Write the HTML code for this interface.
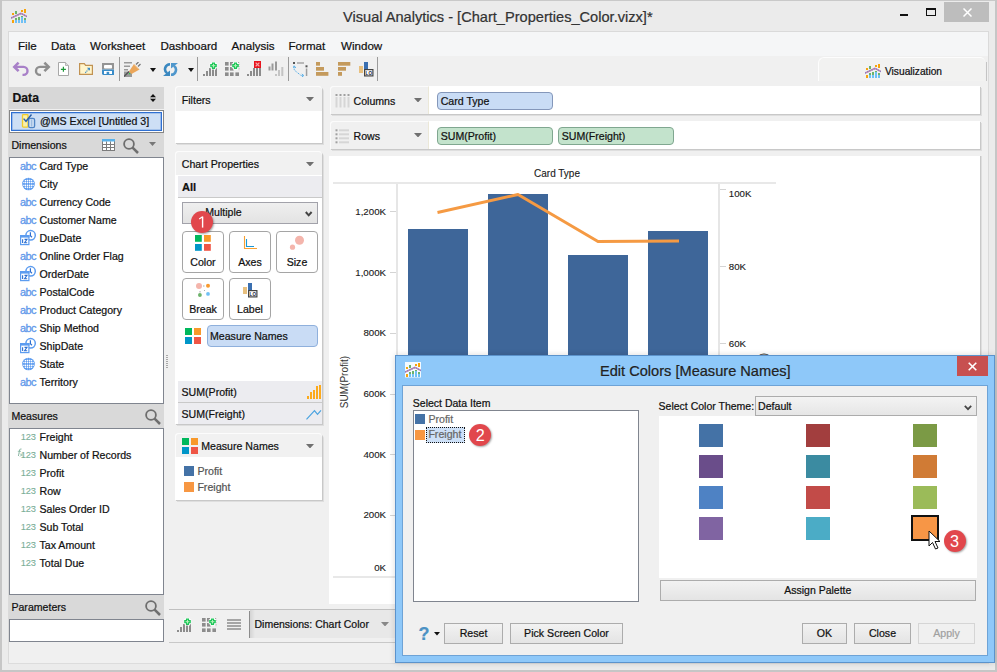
<!DOCTYPE html><html><head><meta charset="utf-8"><style>
html,body{margin:0;padding:0;}
body{width:997px;height:672px;overflow:hidden;position:relative;font-family:"Liberation Sans",sans-serif;}
body>div,body>svg{position:absolute;}
.t{white-space:nowrap;line-height:1;-webkit-text-stroke:0.22px currentColor;}
</style></head><body>
<div style="left:0px;top:0px;width:997px;height:672px;background:#ebebeb"></div>
<div style="left:0px;top:0px;width:997px;height:1px;background:#c9c9c9"></div>
<div style="left:0px;top:0px;width:2px;height:672px;background:#c6c6c6"></div>
<div style="left:995px;top:0px;width:2px;height:672px;background:#c6c6c6"></div>
<div style="left:0px;top:670px;width:997px;height:2px;background:#c6c6c6"></div>
<svg style="left:11px;top:8px;" width="16" height="16" viewBox="0 0 16 16"><rect x="1" y="12" width="2" height="3" fill="#f7a30c"/><rect x="4" y="12" width="2" height="3" fill="#6fc0f5"/><rect x="4" y="10" width="2" height="2" fill="#6db36b"/><rect x="7" y="12" width="2" height="3" fill="#6fc0f5"/><rect x="7" y="9" width="2" height="3" fill="#6db36b"/><rect x="10" y="9" width="2" height="6" fill="#6fc0f5"/><rect x="10" y="8" width="2" height="1" fill="#6db36b"/><rect x="13" y="12" width="2" height="3" fill="#6fc0f5"/><rect x="13" y="10" width="2" height="2" fill="#6db36b"/><rect x="1" y="5" width="2" height="2" fill="#f7a30c"/><rect x="4" y="3" width="2" height="3" fill="#6db36b"/><rect x="10" y="2" width="2" height="2" fill="#f7a30c"/><rect x="13" y="1" width="2" height="4" fill="#f7a30c"/><polyline points="0,10 10,5.4 16,8.6" fill="none" stroke="#c98ba8" stroke-width="1.5"/><polyline points="0,10 10,5.4 16,8.6" fill="none" stroke="#8e7cc3" stroke-width="1.5" stroke-dasharray="1.2 1.2"/></svg>
<div class="t" style="left:343px;top:9.64px;font-size:14.6px;color:#333">Visual Analytics - [Chart_Properties_Color.vizx]*</div>
<div style="left:900px;top:14px;width:8px;height:2px;background:#111"></div>
<div style="left:926px;top:8px;width:10px;height:8px;border:1px solid #111;border-top-width:2px;box-sizing:border-box"></div>
<div style="left:944px;top:2px;width:45px;height:20px;background:#bdbdbd"></div>
<svg style="left:963px;top:8px;" width="9" height="9" viewBox="0 0 9 9"><path d="M0.5 0.5L8.5 8.5M8.5 0.5L0.5 8.5" stroke="#fff" stroke-width="1.5"/></svg>
<div style="left:8px;top:31px;width:981px;height:633px;background:#f0f0f0;border:1px solid #dadada;box-sizing:border-box"></div>
<div style="left:9px;top:32px;width:979px;height:24px;background:#f5f6f7"></div>
<div class="t" style="left:18px;top:40.18px;font-size:11.6px;color:#111">File</div>
<div class="t" style="left:51px;top:40.18px;font-size:11.6px;color:#111">Data</div>
<div class="t" style="left:90px;top:40.18px;font-size:11.6px;color:#111">Worksheet</div>
<div class="t" style="left:160.5px;top:40.18px;font-size:11.6px;color:#111">Dashboard</div>
<div class="t" style="left:231.5px;top:40.18px;font-size:11.6px;color:#111">Analysis</div>
<div class="t" style="left:288.5px;top:40.18px;font-size:11.6px;color:#111">Format</div>
<div class="t" style="left:341px;top:40.18px;font-size:11.6px;color:#111">Window</div>
<div style="left:9px;top:56px;width:979px;height:30px;background:#f0f0f0"></div>
<svg style="left:12px;top:61px;" width="17" height="16" viewBox="0 0 17 16"><path d="M2.5 5.9 H11.5 A4 4 0 0 1 11.5 13.9 H10.5" fill="none" stroke="#a880c8" stroke-width="2.4"/><path d="M6.6 1.6 L2.3 5.9 L6.6 10.2" fill="none" stroke="#a880c8" stroke-width="2.6"/></svg>
<svg style="left:34px;top:61px;" width="17" height="16" viewBox="0 0 17 16"><path d="M14.5 5.9 H6 A4 4 0 0 0 6 13.9 H7" fill="none" stroke="#8e8e8e" stroke-width="2.4"/><path d="M10.4 1.6 L14.7 5.9 L10.4 10.2" fill="none" stroke="#8e8e8e" stroke-width="2.6"/></svg>
<svg style="left:58px;top:62px;" width="11" height="14" viewBox="0 0 11 14"><path d="M0.5 0.5 H7.5 L10.5 3.5 V13.5 H0.5 Z" fill="#fff" stroke="#a8a8a8"/><path d="M7.5 0.5 V3.5 H10.5" fill="#ddd" stroke="#a8a8a8" stroke-width="0.8"/><path d="M5.4 4.8 V9.8 M2.9 7.3 H7.9" stroke="#1f9a3a" stroke-width="1.2"/></svg>
<svg style="left:79px;top:63px;" width="14" height="12" viewBox="0 0 14 12"><path d="M0.6 0.6 H5.3 L6.6 2.4 H13.4 V11.4 H0.6 Z" fill="#fff5cc" stroke="#c19252" stroke-width="1.2"/><path d="M6.3 9.8 L10.3 5.6" stroke="#3a8cc8" stroke-width="1.1" stroke-dasharray="1.1 0.7"/><path d="M7.9 4.7 H11 V7.8 Z" fill="#3a8cc8"/></svg>
<svg style="left:102px;top:63px;" width="12" height="12" viewBox="0 0 12 12"><rect x="0" y="0" width="12" height="6.5" fill="#949494"/><rect x="2" y="2" width="8" height="3.6" rx="0.8" fill="#fff"/><path d="M0 6.5 H12 V12 H1 L0 11 Z" fill="#3a8cc8"/><rect x="2" y="8" width="8" height="3" fill="#fff"/><rect x="4.6" y="8.8" width="2.6" height="2.2" fill="#3a8cc8"/></svg>
<div style="left:119px;top:57px;width:1px;height:24px;background:#9a9a9a"></div>
<svg style="left:124px;top:62px;" width="17" height="15" viewBox="0 0 17 15"><path d="M0 0.7 H8 M0 4.2 H6 M0 7.7 H4" stroke="#9a9a9a" stroke-width="1.4"/><rect x="0" y="9.5" width="8" height="5.5" fill="#9a9a9a"/><path d="M0 14.5 L5 9.5" stroke="#555" stroke-width="1.4"/><path d="M12 2.5 L14.5 0 M14 4.5 L16.5 2" stroke="#777" stroke-width="1.3"/><path d="M5 9.5 L10 2 L15.5 7.5 L7.5 12 Z" fill="#eba65a"/><path d="M10.5 2.8 L14.8 7.2" stroke="#f6d3a6" stroke-width="0.8"/><rect x="5" y="11" width="1.2" height="1.2" fill="#1fdc3a"/></svg>
<svg style="left:150px;top:68px;" width="6" height="4" viewBox="0 0 6 4"><path d="M0 0 H6 L3 4 Z" fill="#111"/></svg>
<svg style="left:163px;top:62px;" width="15" height="15" viewBox="0 0 15 15"><path d="M7 2.2 A5 5 0 0 0 4.2 11.3" fill="none" stroke="#3a88c0" stroke-width="2.6"/><path d="M0 14 H7 V8.5 Z" fill="#3a88c0"/><path d="M8 12.8 A5 5 0 0 0 10.8 3.7" fill="none" stroke="#4f97cc" stroke-width="2.6"/><path d="M15 1 H8 V6.5 Z" fill="#4f97cc"/></svg>
<svg style="left:188px;top:68px;" width="6" height="4" viewBox="0 0 6 4"><path d="M0 0 H6 L3 4 Z" fill="#111"/></svg>
<div style="left:197px;top:57px;width:1px;height:24px;background:#9a9a9a"></div>
<svg style="left:203px;top:62px;" width="15" height="14" viewBox="0 0 15 14"><rect x="0" y="12" width="2" height="2" fill="#8c8c8c"/><rect x="3" y="9" width="2" height="5" fill="#8c8c8c"/><rect x="6" y="6" width="2" height="8" fill="#8c8c8c"/><rect x="9" y="6" width="2" height="8" fill="#8c8c8c"/><rect x="12" y="6" width="2" height="8" fill="#8c8c8c"/><path d="M10.5 0 V7.4 M6.8 3.7 H14.2" stroke="#fff" stroke-width="5"/><path d="M10.5 0.4 V7 M7.2 3.7 H13.8" stroke="#1cc558" stroke-width="3.2"/><path d="M10.5 1.8 V5.6 M8.6 3.7 H12.4" stroke="#b4f0b8" stroke-width="1"/></svg>
<svg style="left:225px;top:62px;" width="15" height="14" viewBox="0 0 15 14"><rect x="0" y="0" width="3.6" height="3.6" fill="#8c8c8c"/><rect x="5" y="0" width="3.6" height="3.6" fill="#8c8c8c"/><rect x="0" y="5" width="3.6" height="3.6" fill="#8c8c8c"/><rect x="5" y="5" width="3.6" height="3.6" fill="#8c8c8c"/><rect x="0" y="10.4" width="3.6" height="3.6" fill="#8c8c8c"/><rect x="5" y="10.4" width="3.6" height="3.6" fill="#8c8c8c"/><rect x="10.4" y="10.4" width="3.6" height="3.6" fill="#8c8c8c"/><path d="M6.5 0.5 H14 V8.5" fill="none" stroke="#8c8c8c" stroke-width="0.8" stroke-dasharray="1.2 1"/><path d="M10.5 0 V7.4 M6.8 3.7 H14.2" stroke="#fff" stroke-width="5"/><path d="M10.5 0.4 V7 M7.2 3.7 H13.8" stroke="#1cc558" stroke-width="3.2"/><path d="M10.5 1.8 V5.6 M8.6 3.7 H12.4" stroke="#b4f0b8" stroke-width="1"/></svg>
<svg style="left:247px;top:61px;" width="15" height="15" viewBox="0 0 15 15"><rect x="0" y="13" width="2" height="2" fill="#8c8c8c"/><rect x="3" y="10" width="2" height="5" fill="#8c8c8c"/><rect x="6" y="7" width="2" height="8" fill="#8c8c8c"/><rect x="9" y="7" width="2" height="8" fill="#8c8c8c"/><rect x="12" y="7" width="2" height="8" fill="#8c8c8c"/><rect x="7" y="0" width="7" height="7" fill="#e8141e"/><path d="M8.6 1.6 L12.4 5.4 M12.4 1.6 L8.6 5.4" stroke="#f7a7a7" stroke-width="1.3"/></svg>
<svg style="left:268px;top:61px;" width="16" height="16" viewBox="0 0 16 16"><rect x="0.5" y="5.5" width="2" height="4" fill="#999"/><rect x="3.5" y="2.5" width="2" height="7" fill="#999"/><rect x="7" y="0.5" width="2" height="9" fill="#999"/><rect x="7" y="13" width="2" height="2" fill="#c4c4c4"/><rect x="10" y="9" width="2" height="6" fill="#c4c4c4"/><rect x="13.3" y="6" width="2" height="9" fill="#c4c4c4"/></svg>
<div style="left:288px;top:57px;width:1px;height:24px;background:#9a9a9a"></div>
<svg style="left:293px;top:62px;" width="15" height="15" viewBox="0 0 15 15"><rect x="0" y="0" width="2" height="2" fill="#555"/><rect x="4" y="0.3" width="7" height="1.4" fill="#a0a0a0"/><rect x="12.5" y="3.3" width="2" height="2" fill="#555"/><rect x="12.8" y="6.5" width="1.5" height="7.5" fill="#a0a0a0"/><path d="M1.2 4.5 V8 L8 13.5 H10.5" fill="none" stroke="#5ab0e8" stroke-width="1" stroke-dasharray="1.3 0.8"/><path d="M0 6 L1.2 3.8 L2.8 6 M8.8 12 L10.8 13.5 L8.8 15" fill="none" stroke="#5ab0e8" stroke-width="1"/></svg>
<svg style="left:316px;top:62px;" width="13" height="14" viewBox="0 0 13 14"><rect x="0" y="0" width="4" height="3.7" fill="#c49a5c"/><rect x="0" y="5" width="8" height="3.7" fill="#c49a5c"/><rect x="0" y="10" width="12.4" height="3.8" fill="#c49a5c"/></svg>
<svg style="left:338px;top:62px;" width="13" height="14" viewBox="0 0 13 14"><rect x="0" y="0" width="12.3" height="3.7" fill="#c49a5c"/><rect x="0" y="5" width="8" height="3.7" fill="#c49a5c"/><rect x="0" y="10" width="4" height="3.8" fill="#c49a5c"/></svg>
<svg style="left:358px;top:61px;" width="16" height="16" viewBox="0 0 16 16"><rect x="1" y="5" width="4" height="7" fill="#e8c07e"/><rect x="6" y="1" width="4" height="8" fill="#3a6fb0"/><rect x="6.6" y="8.6" width="8.3" height="6.3" fill="#fff" stroke="#444" stroke-width="1.2"/><text x="10.8" y="13.6" font-size="4.6" font-family="Liberation Sans" font-weight="bold" text-anchor="middle" fill="#223">LO</text></svg>
<div style="left:377px;top:57px;width:1px;height:24px;background:#9a9a9a"></div>
<div style="left:818px;top:57px;width:167px;height:24px;background:#f2f2f1;border:1px solid #fdfdfd;border-bottom:none;border-right:none;border-radius:6px 5px 0 0;box-sizing:border-box"></div>
<div style="left:986px;top:62px;width:1px;height:19px;background:#c4c4c4"></div>
<svg style="left:865px;top:63px;" width="16" height="16" viewBox="0 0 16 16"><rect x="1" y="12" width="2" height="3" fill="#f7a30c"/><rect x="4" y="12" width="2" height="3" fill="#6fc0f5"/><rect x="4" y="10" width="2" height="2" fill="#6db36b"/><rect x="7" y="12" width="2" height="3" fill="#6fc0f5"/><rect x="7" y="9" width="2" height="3" fill="#6db36b"/><rect x="10" y="9" width="2" height="6" fill="#6fc0f5"/><rect x="10" y="8" width="2" height="1" fill="#6db36b"/><rect x="13" y="12" width="2" height="3" fill="#6fc0f5"/><rect x="13" y="10" width="2" height="2" fill="#6db36b"/><rect x="1" y="5" width="2" height="2" fill="#f7a30c"/><rect x="4" y="3" width="2" height="3" fill="#6db36b"/><rect x="10" y="2" width="2" height="2" fill="#f7a30c"/><rect x="13" y="1" width="2" height="4" fill="#f7a30c"/><polyline points="0,10 10,5.4 16,8.6" fill="none" stroke="#c98ba8" stroke-width="1.5"/><polyline points="0,10 10,5.4 16,8.6" fill="none" stroke="#8e7cc3" stroke-width="1.5" stroke-dasharray="1.2 1.2"/></svg>
<div class="t" style="left:885px;top:66.87px;font-size:10.2px;color:#111">Visualization</div>
<div style="left:9px;top:87px;width:155px;height:22px;background:#d7d7d7"></div>
<div class="t" style="left:12.5px;top:91.67px;font-size:12.2px;font-weight:bold;color:#111">Data</div>
<svg style="left:150px;top:94px;" width="6" height="8" viewBox="0 0 6 8"><path d="M0 3.3 L3 0 L6 3.3 Z M0 4.7 L3 8 L6 4.7 Z" fill="#111"/></svg>
<div style="left:9px;top:110px;width:155px;height:23px;background:#fff;border:1px solid #858585;box-sizing:border-box"></div>
<div style="left:11px;top:112px;width:151px;height:19px;background:#cddff5;border:1px solid #2f70d2;box-shadow:inset 0 0 0 0.6px rgba(47,112,210,0.5);box-sizing:border-box"></div>
<svg style="left:21px;top:113px;" width="15" height="16" viewBox="0 0 15 16"><rect x="1.5" y="1.6" width="5.5" height="12.5" rx="0.8" fill="#fbf1a8" stroke="#f0cc2c" stroke-width="1.3"/><rect x="7.6" y="5.4" width="6" height="9.2" rx="1.6" fill="#c9dcf2" stroke="#4f84c4" stroke-width="1.3"/><path d="M10.6 6.5 V13.5" stroke="#9cbbe0" stroke-width="1.2"/><path d="M2.6 5.6 L5 8.3 L10.5 1.5" fill="none" stroke="#2a5fa8" stroke-width="1.4"/></svg>
<div class="t" style="left:40px;top:116.03px;font-size:10.6px;color:#111">@MS Excel [Untitled 3]</div>
<div style="left:9px;top:133px;width:155px;height:24px;background:#d9d9d9"></div>
<div class="t" style="left:11.4px;top:140.03px;font-size:10.6px;color:#111">Dimensions</div>
<svg style="left:102px;top:139px;" width="13" height="12" viewBox="0 0 13 12"><rect x="0.5" y="0.5" width="12" height="11" fill="#fff" stroke="#7c7c7c"/><rect x="0" y="0" width="13" height="2.5" fill="#5ab2ea"/><path d="M0 5.5 H13 M0 8.5 H13 M4.5 2.5 V12 M8.5 2.5 V12" stroke="#7c7c7c"/></svg>
<svg style="left:123px;top:138px;" width="17" height="17" viewBox="0 0 17 17"><circle cx="6" cy="6" r="4.9" fill="none" stroke="#6e6e6e" stroke-width="1.8"/><path d="M9.6 9.6 L15 15" stroke="#6e6e6e" stroke-width="2.5"/></svg>
<svg style="left:149px;top:142px;" width="7" height="4" viewBox="0 0 7 4"><path d="M0 0 H7 L3.5 4 Z" fill="#777"/></svg>
<div style="left:9px;top:157px;width:155px;height:247px;background:#fff;border:1px solid #80858f;box-sizing:border-box"></div>
<div class="t" style="left:20px;top:160.69px;font-size:11px;color:#5f98ea;letter-spacing:-0.6px;-webkit-text-stroke:0.3px currentColor">abc</div>
<div class="t" style="left:39.5px;top:161.03px;font-size:10.6px;color:#111">Card Type</div>
<svg style="left:22px;top:177px;" width="13" height="14" viewBox="0 0 13 14"><circle cx="6.5" cy="7" r="6.3" fill="#5c9cf0"/><path d="M3 3.6 H10 M1.5 5.5 H11.5 M1.5 8.4 H11.5 M3 10.3 H10 M3.4 3 V11 M5.5 1 V13 M7.6 1 V13 M9.6 3 V11" stroke="#a2c4f5" stroke-width="0.6"/><rect x="2.80" y="3.00" width="1.2" height="1.2" fill="#fff"/><rect x="4.90" y="3.00" width="1.2" height="1.2" fill="#fff"/><rect x="7.00" y="3.00" width="1.2" height="1.2" fill="#fff"/><rect x="9.00" y="3.00" width="1.2" height="1.2" fill="#fff"/><rect x="2.80" y="4.90" width="1.2" height="1.2" fill="#fff"/><rect x="4.90" y="4.90" width="1.2" height="1.2" fill="#fff"/><rect x="7.00" y="4.90" width="1.2" height="1.2" fill="#fff"/><rect x="9.00" y="4.90" width="1.2" height="1.2" fill="#fff"/><rect x="2.80" y="7.80" width="1.2" height="1.2" fill="#fff"/><rect x="4.90" y="7.80" width="1.2" height="1.2" fill="#fff"/><rect x="7.00" y="7.80" width="1.2" height="1.2" fill="#fff"/><rect x="9.00" y="7.80" width="1.2" height="1.2" fill="#fff"/><rect x="2.80" y="9.70" width="1.2" height="1.2" fill="#fff"/><rect x="4.90" y="9.70" width="1.2" height="1.2" fill="#fff"/><rect x="7.00" y="9.70" width="1.2" height="1.2" fill="#fff"/><rect x="9.00" y="9.70" width="1.2" height="1.2" fill="#fff"/><rect x="1.30" y="4.90" width="1" height="1.2" fill="#fff"/><rect x="10.70" y="4.90" width="1" height="1.2" fill="#fff"/><rect x="1.30" y="7.80" width="1" height="1.2" fill="#fff"/><rect x="10.70" y="7.80" width="1" height="1.2" fill="#fff"/></svg>
<div class="t" style="left:39.5px;top:179.03px;font-size:10.6px;color:#111">City</div>
<div class="t" style="left:20px;top:196.69px;font-size:11px;color:#5f98ea;letter-spacing:-0.6px;-webkit-text-stroke:0.3px currentColor">abc</div>
<div class="t" style="left:39.5px;top:197.03px;font-size:10.6px;color:#111">Currency Code</div>
<div class="t" style="left:20px;top:214.69px;font-size:11px;color:#5f98ea;letter-spacing:-0.6px;-webkit-text-stroke:0.3px currentColor">abc</div>
<div class="t" style="left:39.5px;top:215.03px;font-size:10.6px;color:#111">Customer Name</div>
<svg style="left:20px;top:227px;" width="17" height="19" viewBox="0 0 17 19"><circle cx="10.6" cy="8.3" r="4.7" fill="#fff" stroke="#5c9cf0" stroke-width="1.5"/><path d="M10.4 5.2 V8.8 L12 10.2" fill="none" stroke="#2d6fd0" stroke-width="1.2"/><rect x="0.6" y="8.6" width="8.3" height="9" fill="#fff" stroke="#5c9cf0" stroke-width="1.2"/><rect x="0" y="8" width="9.5" height="2.6" fill="#5c9cf0"/><path d="M2.6 12.2 V16" stroke="#2d6fd0" stroke-width="1.1"/><path d="M4.5 12.4 H7 L4.6 15.8 H7.2" fill="none" stroke="#2d6fd0" stroke-width="1.1"/></svg>
<div class="t" style="left:39.5px;top:233.03px;font-size:10.6px;color:#111">DueDate</div>
<div class="t" style="left:20px;top:250.69px;font-size:11px;color:#5f98ea;letter-spacing:-0.6px;-webkit-text-stroke:0.3px currentColor">abc</div>
<div class="t" style="left:39.5px;top:251.03px;font-size:10.6px;color:#111">Online Order Flag</div>
<svg style="left:20px;top:263px;" width="17" height="19" viewBox="0 0 17 19"><circle cx="10.6" cy="8.3" r="4.7" fill="#fff" stroke="#5c9cf0" stroke-width="1.5"/><path d="M10.4 5.2 V8.8 L12 10.2" fill="none" stroke="#2d6fd0" stroke-width="1.2"/><rect x="0.6" y="8.6" width="8.3" height="9" fill="#fff" stroke="#5c9cf0" stroke-width="1.2"/><rect x="0" y="8" width="9.5" height="2.6" fill="#5c9cf0"/><path d="M2.6 12.2 V16" stroke="#2d6fd0" stroke-width="1.1"/><path d="M4.5 12.4 H7 L4.6 15.8 H7.2" fill="none" stroke="#2d6fd0" stroke-width="1.1"/></svg>
<div class="t" style="left:39.5px;top:269.03px;font-size:10.6px;color:#111">OrderDate</div>
<div class="t" style="left:20px;top:286.69px;font-size:11px;color:#5f98ea;letter-spacing:-0.6px;-webkit-text-stroke:0.3px currentColor">abc</div>
<div class="t" style="left:39.5px;top:287.03px;font-size:10.6px;color:#111">PostalCode</div>
<div class="t" style="left:20px;top:304.69px;font-size:11px;color:#5f98ea;letter-spacing:-0.6px;-webkit-text-stroke:0.3px currentColor">abc</div>
<div class="t" style="left:39.5px;top:305.03px;font-size:10.6px;color:#111">Product Category</div>
<div class="t" style="left:20px;top:322.69px;font-size:11px;color:#5f98ea;letter-spacing:-0.6px;-webkit-text-stroke:0.3px currentColor">abc</div>
<div class="t" style="left:39.5px;top:323.03px;font-size:10.6px;color:#111">Ship Method</div>
<svg style="left:20px;top:335px;" width="17" height="19" viewBox="0 0 17 19"><circle cx="10.6" cy="8.3" r="4.7" fill="#fff" stroke="#5c9cf0" stroke-width="1.5"/><path d="M10.4 5.2 V8.8 L12 10.2" fill="none" stroke="#2d6fd0" stroke-width="1.2"/><rect x="0.6" y="8.6" width="8.3" height="9" fill="#fff" stroke="#5c9cf0" stroke-width="1.2"/><rect x="0" y="8" width="9.5" height="2.6" fill="#5c9cf0"/><path d="M2.6 12.2 V16" stroke="#2d6fd0" stroke-width="1.1"/><path d="M4.5 12.4 H7 L4.6 15.8 H7.2" fill="none" stroke="#2d6fd0" stroke-width="1.1"/></svg>
<div class="t" style="left:39.5px;top:341.03px;font-size:10.6px;color:#111">ShipDate</div>
<svg style="left:22px;top:357px;" width="13" height="14" viewBox="0 0 13 14"><circle cx="6.5" cy="7" r="6.3" fill="#5c9cf0"/><path d="M3 3.6 H10 M1.5 5.5 H11.5 M1.5 8.4 H11.5 M3 10.3 H10 M3.4 3 V11 M5.5 1 V13 M7.6 1 V13 M9.6 3 V11" stroke="#a2c4f5" stroke-width="0.6"/><rect x="2.80" y="3.00" width="1.2" height="1.2" fill="#fff"/><rect x="4.90" y="3.00" width="1.2" height="1.2" fill="#fff"/><rect x="7.00" y="3.00" width="1.2" height="1.2" fill="#fff"/><rect x="9.00" y="3.00" width="1.2" height="1.2" fill="#fff"/><rect x="2.80" y="4.90" width="1.2" height="1.2" fill="#fff"/><rect x="4.90" y="4.90" width="1.2" height="1.2" fill="#fff"/><rect x="7.00" y="4.90" width="1.2" height="1.2" fill="#fff"/><rect x="9.00" y="4.90" width="1.2" height="1.2" fill="#fff"/><rect x="2.80" y="7.80" width="1.2" height="1.2" fill="#fff"/><rect x="4.90" y="7.80" width="1.2" height="1.2" fill="#fff"/><rect x="7.00" y="7.80" width="1.2" height="1.2" fill="#fff"/><rect x="9.00" y="7.80" width="1.2" height="1.2" fill="#fff"/><rect x="2.80" y="9.70" width="1.2" height="1.2" fill="#fff"/><rect x="4.90" y="9.70" width="1.2" height="1.2" fill="#fff"/><rect x="7.00" y="9.70" width="1.2" height="1.2" fill="#fff"/><rect x="9.00" y="9.70" width="1.2" height="1.2" fill="#fff"/><rect x="1.30" y="4.90" width="1" height="1.2" fill="#fff"/><rect x="10.70" y="4.90" width="1" height="1.2" fill="#fff"/><rect x="1.30" y="7.80" width="1" height="1.2" fill="#fff"/><rect x="10.70" y="7.80" width="1" height="1.2" fill="#fff"/></svg>
<div class="t" style="left:39.5px;top:359.03px;font-size:10.6px;color:#111">State</div>
<div class="t" style="left:20px;top:376.69px;font-size:11px;color:#5f98ea;letter-spacing:-0.6px;-webkit-text-stroke:0.3px currentColor">abc</div>
<div class="t" style="left:39.5px;top:377.03px;font-size:10.6px;color:#111">Territory</div>
<div style="left:9px;top:404px;width:155px;height:24px;background:#d9d9d9"></div>
<div class="t" style="left:11.4px;top:411.03px;font-size:10.6px;color:#111">Measures</div>
<svg style="left:145px;top:409px;" width="17" height="17" viewBox="0 0 17 17"><circle cx="6" cy="6" r="4.9" fill="none" stroke="#6e6e6e" stroke-width="1.8"/><path d="M9.6 9.6 L15 15" stroke="#6e6e6e" stroke-width="2.5"/></svg>
<div style="left:9px;top:428px;width:155px;height:167px;background:#fff;border:1px solid #80858f;box-sizing:border-box"></div>
<div class="t" style="left:20.7px;top:433.13px;font-size:9.3px;color:#7aae98;letter-spacing:-0.1px;-webkit-text-stroke:0.1px currentColor">123</div>
<div class="t" style="left:39.5px;top:432.03px;font-size:10.6px;color:#111">Freight</div>
<div class="t" style="left:20.7px;top:451.13px;font-size:9.3px;color:#7aae98;letter-spacing:-0.1px;-webkit-text-stroke:0.1px currentColor">123</div>
<div class="t" style="left:39.5px;top:450.03px;font-size:10.6px;color:#111">Number of Records</div>
<div class="t" style="left:20.7px;top:469.13px;font-size:9.3px;color:#7aae98;letter-spacing:-0.1px;-webkit-text-stroke:0.1px currentColor">123</div>
<div class="t" style="left:39.5px;top:468.03px;font-size:10.6px;color:#111">Profit</div>
<div class="t" style="left:20.7px;top:487.13px;font-size:9.3px;color:#7aae98;letter-spacing:-0.1px;-webkit-text-stroke:0.1px currentColor">123</div>
<div class="t" style="left:39.5px;top:486.03px;font-size:10.6px;color:#111">Row</div>
<div class="t" style="left:20.7px;top:505.13px;font-size:9.3px;color:#7aae98;letter-spacing:-0.1px;-webkit-text-stroke:0.1px currentColor">123</div>
<div class="t" style="left:39.5px;top:504.03px;font-size:10.6px;color:#111">Sales Order ID</div>
<div class="t" style="left:20.7px;top:523.13px;font-size:9.3px;color:#7aae98;letter-spacing:-0.1px;-webkit-text-stroke:0.1px currentColor">123</div>
<div class="t" style="left:39.5px;top:522.03px;font-size:10.6px;color:#111">Sub Total</div>
<div class="t" style="left:20.7px;top:541.13px;font-size:9.3px;color:#7aae98;letter-spacing:-0.1px;-webkit-text-stroke:0.1px currentColor">123</div>
<div class="t" style="left:39.5px;top:540.03px;font-size:10.6px;color:#111">Tax Amount</div>
<div class="t" style="left:20.7px;top:559.13px;font-size:9.3px;color:#7aae98;letter-spacing:-0.1px;-webkit-text-stroke:0.1px currentColor">123</div>
<div class="t" style="left:39.5px;top:558.03px;font-size:10.6px;color:#111">Total Due</div>
<svg style="left:16px;top:448px;" width="8" height="9" viewBox="0 0 8 9"><path d="M5.5 1 Q4 0.5 3.6 2 L2.4 8" fill="none" stroke="#7fb09b" stroke-width="0.9"/><path d="M1.8 3.3 H5" stroke="#7fb09b" stroke-width="0.8"/><path d="M4 5.5 L7 8.5 M7 5.5 L4 8.5" stroke="#7fb09b" stroke-width="0.8"/></svg>
<div style="left:9px;top:595px;width:155px;height:24px;background:#d9d9d9"></div>
<div class="t" style="left:11.4px;top:602.03px;font-size:10.6px;color:#111">Parameters</div>
<svg style="left:145px;top:600px;" width="17" height="17" viewBox="0 0 17 17"><circle cx="6" cy="6" r="4.9" fill="none" stroke="#6e6e6e" stroke-width="1.8"/><path d="M9.6 9.6 L15 15" stroke="#6e6e6e" stroke-width="2.5"/></svg>
<div style="left:9px;top:619px;width:155px;height:23px;background:#fff;border:1px solid #80858f;box-sizing:border-box"></div>
<div style="left:9px;top:642px;width:979px;height:21px;background:#f0f0f0"></div>
<div style="left:8px;top:663px;width:981px;height:1px;background:#dcdcdc"></div>
<div style="left:166px;top:355px;width:2px;height:1px;background:#a8a8a8"></div>
<div style="left:166px;top:357px;width:2px;height:1px;background:#a8a8a8"></div>
<div style="left:166px;top:359px;width:2px;height:1px;background:#a8a8a8"></div>
<div style="left:166px;top:361px;width:2px;height:1px;background:#a8a8a8"></div>
<div style="left:166px;top:363px;width:2px;height:1px;background:#a8a8a8"></div>
<div style="left:166px;top:365px;width:2px;height:1px;background:#a8a8a8"></div>
<div style="left:166px;top:367px;width:2px;height:1px;background:#a8a8a8"></div>
<div style="left:175px;top:86px;width:147px;height:57px;background:#fff;border-radius:4px 4px 0 0;box-shadow:1px 1px 0 #c8c8c8, 2px 2px 0 #dedede"></div>
<div style="left:175px;top:86px;width:147px;height:25px;background:#f1f1f1;border-top:1px solid #fcfcfc;border-left:1px solid #fcfcfc;border-radius:4px 4px 0 0;box-sizing:border-box"></div>
<div class="t" style="left:181.8px;top:95.03px;font-size:10.6px;color:#111">Filters</div>
<svg style="left:306px;top:97px;" width="8" height="4" viewBox="0 0 8 4"><path d="M0 0 H8 L4 4.5 Z" fill="#707070"/></svg>
<div style="left:175px;top:151px;width:147px;height:273px;background:#fff;border-radius:4px 4px 0 0;box-shadow:1px 1px 0 #c8c8c8, 2px 2px 0 #dedede"></div>
<div style="left:175px;top:151px;width:147px;height:24px;background:#f1f1f1;border-top:1px solid #fcfcfc;border-left:1px solid #fcfcfc;border-radius:4px 4px 0 0;box-sizing:border-box"></div>
<div class="t" style="left:181.8px;top:159.03px;font-size:10.6px;color:#111">Chart Properties</div>
<svg style="left:306px;top:162px;" width="8" height="4" viewBox="0 0 8 4"><path d="M0 0 H8 L4 4.5 Z" fill="#707070"/></svg>
<div style="left:178px;top:176px;width:144px;height:22px;background:#ececf0;border-bottom:1px solid #c9c9c9;box-sizing:border-box"></div>
<div class="t" style="left:182px;top:181.60px;font-size:11.1px;font-weight:bold;color:#111">All</div>
<div style="left:182px;top:202px;width:136px;height:22px;background:linear-gradient(#efefef,#e3e3e3);border:1px solid #a2a2aa;box-sizing:border-box"></div>
<div class="t" style="left:205.2px;top:207.43px;font-size:10.6px;color:#111">Multiple</div>
<svg style="left:305px;top:211px;" width="8" height="6" viewBox="0 0 8 6"><path d="M0.8 1 L3.7 4.3 L6.6 1" fill="none" stroke="#444" stroke-width="2"/></svg>
<div style="left:182px;top:231px;width:42px;height:42px;background:#fff;border:1px solid #a5a5a5;border-radius:4px;box-sizing:border-box"></div>
<div class="t" style="left:-97px;width:600px;text-align:center;top:257.03px;font-size:10.6px;color:#111">Color</div>
<div style="left:229px;top:231px;width:42px;height:42px;background:#fff;border:1px solid #a5a5a5;border-radius:4px;box-sizing:border-box"></div>
<div class="t" style="left:-50px;width:600px;text-align:center;top:257.03px;font-size:10.6px;color:#111">Axes</div>
<div style="left:276px;top:231px;width:42px;height:42px;background:#fff;border:1px solid #a5a5a5;border-radius:4px;box-sizing:border-box"></div>
<div class="t" style="left:-3px;width:600px;text-align:center;top:257.03px;font-size:10.6px;color:#111">Size</div>
<div style="left:182px;top:278px;width:42px;height:42px;background:#fff;border:1px solid #a5a5a5;border-radius:4px;box-sizing:border-box"></div>
<div class="t" style="left:-97px;width:600px;text-align:center;top:304.03px;font-size:10.6px;color:#111">Break</div>
<div style="left:229px;top:278px;width:42px;height:42px;background:#fff;border:1px solid #a5a5a5;border-radius:4px;box-sizing:border-box"></div>
<div class="t" style="left:-50px;width:600px;text-align:center;top:304.03px;font-size:10.6px;color:#111">Label</div>
<svg style="left:195px;top:235px;" width="15.8" height="15.8" viewBox="0 0 15.8 15.8"><rect x="0" y="0" width="6.8" height="6.8" fill="#00b85c"/><rect x="9.0" y="0" width="6.8" height="6.8" fill="#f8992a"/><rect x="0" y="9.0" width="6.8" height="6.8" fill="#0096c8"/><rect x="9.0" y="9.0" width="6.8" height="6.8" fill="#ef5646"/></svg>
<svg style="left:243px;top:235px;" width="16" height="16" viewBox="0 0 16 16"><path d="M1.5 1 V13.5 H14" fill="none" stroke="#f7a033" stroke-width="1.1"/><path d="M3.5 4 V11.5 H11" fill="none" stroke="#1a98d5" stroke-width="1.1"/></svg>
<svg style="left:288px;top:234px;" width="18" height="17" viewBox="0 0 18 17"><circle cx="11.5" cy="6.2" r="4.5" fill="#f4b5ac"/><circle cx="4.5" cy="13.2" r="2.6" fill="#f4b5ac"/></svg>
<svg style="left:194px;top:282px;" width="18" height="17" viewBox="0 0 18 17"><circle cx="5" cy="3.9" r="3" fill="#f4b5ac"/><circle cx="14" cy="3.7" r="2" fill="#f89a2e"/><circle cx="5.9" cy="13" r="1.9" fill="#6db36b"/><circle cx="14" cy="11.9" r="1.9" fill="#6fc0f5"/><path d="M9 4 H10.5 M10 8 L11 9 M6 9 V10.5" stroke="#888" stroke-width="0.7"/></svg>
<svg style="left:242px;top:282px;" width="16" height="16" viewBox="0 0 16 16"><rect x="1" y="5" width="4" height="7" fill="#e8c07e"/><rect x="6" y="1" width="4" height="8" fill="#3a6fb0"/><rect x="6.6" y="8.6" width="8.3" height="6.3" fill="#fff" stroke="#444" stroke-width="1.2"/><text x="10.8" y="13.6" font-size="4.6" font-family="Liberation Sans" font-weight="bold" text-anchor="middle" fill="#223">LO</text></svg>
<svg style="left:185px;top:328px;" width="16" height="16" viewBox="0 0 16 16"><rect x="0" y="0" width="7" height="7" fill="#00b85c"/><rect x="9" y="0" width="7" height="7" fill="#f8992a"/><rect x="0" y="9" width="7" height="7" fill="#0096c8"/><rect x="9" y="9" width="7" height="7" fill="#ef5646"/></svg>
<div style="left:207px;top:325px;width:111px;height:22px;background:#c9dcf5;border:1px solid #8fb0dc;border-radius:4px;box-sizing:border-box"></div>
<div class="t" style="left:210px;top:331.03px;font-size:10.6px;color:#111">Measure Names</div>
<div style="left:178px;top:381px;width:144px;height:21px;background:#ececf0"></div>
<div style="left:178px;top:402px;width:144px;height:1px;background:#c9c9c9"></div>
<div style="left:178px;top:403px;width:144px;height:21px;background:#ececf0"></div>
<div class="t" style="left:181.5px;top:386.53px;font-size:10.6px;color:#111">SUM(Profit)</div>
<div class="t" style="left:181.5px;top:408.73px;font-size:10.6px;color:#111">SUM(Freight)</div>
<svg style="left:307px;top:385px;" width="14" height="14" viewBox="0 0 14 14"><rect x="0" y="11" width="2" height="3" fill="#fcaa1c"/><rect x="3" y="7" width="2" height="7" fill="#fcaa1c"/><rect x="6" y="5" width="2" height="9" fill="#fcaa1c"/><rect x="9" y="1" width="2" height="13" fill="#fcaa1c"/><rect x="12" y="0" width="2" height="14" fill="#fcaa1c"/></svg>
<svg style="left:306px;top:408px;" width="16" height="13" viewBox="0 0 16 13"><polyline points="0.5,11.3 8.5,2.7 11.5,6.4 15,2.3" fill="none" stroke="#4aa3e0" stroke-width="1.2"/></svg>
<div style="left:175px;top:433px;width:147px;height:67px;background:#fff;border-radius:4px 4px 0 0;box-shadow:1px 1px 0 #c8c8c8, 2px 2px 0 #dedede"></div>
<div style="left:175px;top:433px;width:147px;height:24px;background:#f1f1f1;border-top:1px solid #fcfcfc;border-left:1px solid #fcfcfc;border-radius:4px 4px 0 0;box-sizing:border-box"></div>
<svg style="left:182px;top:438px;" width="16" height="16" viewBox="0 0 16 16"><rect x="0" y="0" width="7" height="7" fill="#00b85c"/><rect x="9" y="0" width="7" height="7" fill="#f8992a"/><rect x="0" y="9" width="7" height="7" fill="#0096c8"/><rect x="9" y="9" width="7" height="7" fill="#ef5646"/></svg>
<div class="t" style="left:201.2px;top:441.03px;font-size:10.6px;color:#111">Measure Names</div>
<svg style="left:306px;top:444px;" width="8" height="4" viewBox="0 0 8 4"><path d="M0 0 H8 L4 4.5 Z" fill="#707070"/></svg>
<div style="left:184px;top:466px;width:10px;height:10px;background:#4472a6"></div>
<div style="left:184px;top:482px;width:10px;height:10px;background:#f79742"></div>
<div class="t" style="left:197.4px;top:465.83px;font-size:10.6px;color:#555">Profit</div>
<div class="t" style="left:197.4px;top:481.53px;font-size:10.6px;color:#555">Freight</div>
<div style="left:330px;top:86px;width:650px;height:28px;background:#fff;border-radius:4px 0 0 0;box-shadow:1px 1px 0 #c8c8c8, 2px 2px 0 #dedede"></div>
<div style="left:330px;top:86px;width:99px;height:28px;background:#f0f0f0;border-top:1px solid #fbfbfb;border-left:1px solid #fbfbfb;border-right:1px solid #ebe8d8;border-radius:4px 0 0 0;box-sizing:border-box"></div>
<div class="t" style="left:353.5px;top:96.03px;font-size:10.6px;color:#111">Columns</div>
<svg style="left:413.5px;top:98px;" width="8" height="4" viewBox="0 0 8 4"><path d="M0 0 H8 L4 4.5 Z" fill="#707070"/></svg>
<svg style="left:335px;top:93px;" width="15" height="16" viewBox="0 0 15 16"><rect x="0.5" y="1" width="2" height="2" fill="#a0a0a0"/><rect x="0.5" y="4" width="2" height="10.5" fill="#d6d6d6" /><rect x="4.5" y="1" width="2" height="2" fill="#a0a0a0"/><rect x="4.5" y="4" width="2" height="10.5" fill="#d6d6d6" /><rect x="8.5" y="1" width="2" height="2" fill="#a0a0a0"/><rect x="8.5" y="4" width="2" height="10.5" fill="#d6d6d6" /><rect x="12.5" y="1" width="2" height="2" fill="#a0a0a0"/><rect x="12.5" y="4" width="2" height="10.5" fill="#d6d6d6" /></svg>
<div style="left:330px;top:121px;width:650px;height:28px;background:#fff;border-radius:4px 0 0 0;box-shadow:1px 1px 0 #c8c8c8, 2px 2px 0 #dedede"></div>
<div style="left:330px;top:121px;width:99px;height:28px;background:#f0f0f0;border-top:1px solid #fbfbfb;border-left:1px solid #fbfbfb;border-right:1px solid #ebe8d8;border-radius:4px 0 0 0;box-sizing:border-box"></div>
<div class="t" style="left:353.5px;top:131.03px;font-size:10.6px;color:#111">Rows</div>
<svg style="left:413.5px;top:133px;" width="8" height="4" viewBox="0 0 8 4"><path d="M0 0 H8 L4 4.5 Z" fill="#707070"/></svg>
<svg style="left:335px;top:128px;" width="15" height="16" viewBox="0 0 15 16"><rect x="0.5" y="1.3" width="2" height="2" fill="#a0a0a0"/><rect x="4" y="1.3" width="10" height="2" fill="#d6d6d6" /><rect x="0.5" y="5.3" width="2" height="2" fill="#a0a0a0"/><rect x="4" y="5.3" width="10" height="2" fill="#d6d6d6" /><rect x="0.5" y="9.3" width="2" height="2" fill="#a0a0a0"/><rect x="4" y="9.3" width="10" height="2" fill="#d6d6d6" /><rect x="0.5" y="13.3" width="2" height="2" fill="#a0a0a0"/><rect x="4" y="13.3" width="10" height="2" fill="#d6d6d6" /></svg>
<div style="left:437px;top:92px;width:116px;height:18px;background:#c9dcf5;border:1px solid #8497ba;border-radius:4px;box-sizing:border-box"></div>
<div class="t" style="left:440.7px;top:96.03px;font-size:10.6px;color:#111">Card Type</div>
<div style="left:437px;top:127px;width:116px;height:18px;background:#c3e3cc;border:1px solid #80a790;border-radius:4px;box-sizing:border-box"></div>
<div class="t" style="left:440.7px;top:131.03px;font-size:10.6px;color:#111">SUM(Profit)</div>
<div style="left:558px;top:127px;width:116px;height:18px;background:#c3e3cc;border:1px solid #80a790;border-radius:4px;box-sizing:border-box"></div>
<div class="t" style="left:561.7px;top:131.03px;font-size:10.6px;color:#111">SUM(Freight)</div>
<div style="left:329px;top:156px;width:651px;height:448px;background:#fff;box-shadow:1px 0 0 #c8c8c8, 2px 0 0 #dedede"></div>
<div class="t" style="left:257px;width:600px;text-align:center;top:168.53px;font-size:10px;color:#1a1a1a;-webkit-text-stroke:0.12px currentColor">Card Type</div>
<div style="left:333px;top:182px;width:443px;height:2px;background:#e8e8e8"></div>
<div style="left:396px;top:184px;width:2px;height:392px;background:#e6e6e6"></div>
<div style="left:718px;top:184px;width:2px;height:392px;background:#e6e6e6"></div>
<div style="left:333px;top:576px;width:443px;height:2px;background:#e8e8e8"></div>
<div style="left:408px;top:229px;width:60px;height:347px;background:#3e6699"></div>
<div style="left:488px;top:194px;width:60px;height:382px;background:#3e6699"></div>
<div style="left:568px;top:254.5px;width:60px;height:321.5px;background:#3e6699"></div>
<div style="left:648px;top:231px;width:60px;height:345px;background:#3e6699"></div>
<svg style="left:330px;top:156px;" width="460" height="120" viewBox="0 0 460 120"><polyline points="107.5,56.5 188,38.5 268,85.5 349,85" fill="none" stroke="#f59a43" stroke-width="3" stroke-linejoin="round"/></svg>
<div style="left:390px;top:211px;width:6px;height:1px;background:#d4d4d4"></div>
<div class="t" style="right:611px;top:206.99px;font-size:9.7px;color:#1a1a1a;-webkit-text-stroke:0.12px currentColor">1,200K</div>
<div style="left:390px;top:272px;width:6px;height:1px;background:#d4d4d4"></div>
<div class="t" style="right:611px;top:267.69px;font-size:9.7px;color:#1a1a1a;-webkit-text-stroke:0.12px currentColor">1,000K</div>
<div style="left:390px;top:333px;width:6px;height:1px;background:#d4d4d4"></div>
<div class="t" style="right:611px;top:328.39px;font-size:9.7px;color:#1a1a1a;-webkit-text-stroke:0.12px currentColor">800K</div>
<div style="left:390px;top:394px;width:6px;height:1px;background:#d4d4d4"></div>
<div class="t" style="right:611px;top:389.09px;font-size:9.7px;color:#1a1a1a;-webkit-text-stroke:0.12px currentColor">600K</div>
<div style="left:390px;top:454px;width:6px;height:1px;background:#d4d4d4"></div>
<div class="t" style="right:611px;top:449.79px;font-size:9.7px;color:#1a1a1a;-webkit-text-stroke:0.12px currentColor">400K</div>
<div style="left:390px;top:515px;width:6px;height:1px;background:#d4d4d4"></div>
<div class="t" style="right:611px;top:510.49px;font-size:9.7px;color:#1a1a1a;-webkit-text-stroke:0.12px currentColor">200K</div>
<div class="t" style="right:611px;top:563.29px;font-size:9.7px;color:#1a1a1a;-webkit-text-stroke:0.12px currentColor">0K</div>
<div style="left:720px;top:189px;width:6px;height:1px;background:#d4d4d4"></div>
<div class="t" style="left:728.8px;top:188.79px;font-size:9.7px;color:#1a1a1a;-webkit-text-stroke:0.12px currentColor">100K</div>
<div style="left:720px;top:266px;width:6px;height:1px;background:#d4d4d4"></div>
<div class="t" style="left:728.8px;top:261.99px;font-size:9.7px;color:#1a1a1a;-webkit-text-stroke:0.12px currentColor">80K</div>
<div style="left:720px;top:343px;width:6px;height:1px;background:#d4d4d4"></div>
<div class="t" style="left:728.8px;top:338.99px;font-size:9.7px;color:#1a1a1a;-webkit-text-stroke:0.12px currentColor">60K</div>
<div class="t" style="left:318px;top:377px;width:54px;text-align:center;font-size:10px;color:#333;-webkit-text-stroke:0;transform:rotate(-90deg)">SUM(Profit)</div>
<div class="t" style="left:733px;top:378px;width:62px;text-align:center;font-size:10px;color:#333;-webkit-text-stroke:0;transform:rotate(-90deg)">SUM(Freight)</div>
<div style="left:169px;top:609px;width:226px;height:1px;background:#c0c0c0"></div>
<svg style="left:177px;top:618px;" width="15" height="14" viewBox="0 0 15 14"><rect x="0" y="12" width="2" height="2" fill="#8c8c8c"/><rect x="3" y="9" width="2" height="5" fill="#8c8c8c"/><rect x="6" y="6" width="2" height="8" fill="#8c8c8c"/><rect x="9" y="6" width="2" height="8" fill="#8c8c8c"/><rect x="12" y="6" width="2" height="8" fill="#8c8c8c"/><path d="M10.5 0 V7.4 M6.8 3.7 H14.2" stroke="#fff" stroke-width="5"/><path d="M10.5 0.4 V7 M7.2 3.7 H13.8" stroke="#1cc558" stroke-width="3.2"/><path d="M10.5 1.8 V5.6 M8.6 3.7 H12.4" stroke="#b4f0b8" stroke-width="1"/></svg>
<svg style="left:202px;top:618px;" width="15" height="14" viewBox="0 0 15 14"><rect x="0" y="0" width="3.6" height="3.6" fill="#8c8c8c"/><rect x="5" y="0" width="3.6" height="3.6" fill="#8c8c8c"/><rect x="0" y="5" width="3.6" height="3.6" fill="#8c8c8c"/><rect x="5" y="5" width="3.6" height="3.6" fill="#8c8c8c"/><rect x="0" y="10.4" width="3.6" height="3.6" fill="#8c8c8c"/><rect x="5" y="10.4" width="3.6" height="3.6" fill="#8c8c8c"/><rect x="10.4" y="10.4" width="3.6" height="3.6" fill="#8c8c8c"/><path d="M6.5 0.5 H14 V8.5" fill="none" stroke="#8c8c8c" stroke-width="0.8" stroke-dasharray="1.2 1"/><path d="M10.5 0 V7.4 M6.8 3.7 H14.2" stroke="#fff" stroke-width="5"/><path d="M10.5 0.4 V7 M7.2 3.7 H13.8" stroke="#1cc558" stroke-width="3.2"/><path d="M10.5 1.8 V5.6 M8.6 3.7 H12.4" stroke="#b4f0b8" stroke-width="1"/></svg>
<svg style="left:227px;top:619px;" width="14" height="11" viewBox="0 0 14 11"><path d="M0 1 H14 M0 4 H14 M0 7 H14 M0 10 H14" stroke="#8c8c8c" stroke-width="1.4"/></svg>
<div style="left:249px;top:611px;width:1px;height:27px;background:#8c8c8c"></div>
<div style="left:250px;top:610px;width:5px;height:28px;background:linear-gradient(90deg,#d4d4d4,#e8e8e8)"></div>
<div style="left:255px;top:610px;width:140px;height:28px;background:#e8e8e8"></div>
<div style="left:169px;top:642px;width:226px;height:1px;background:#c8c8c8"></div>
<div class="t" style="left:254.5px;top:618.61px;font-size:10.5px;color:#111">Dimensions: Chart Color</div>
<svg style="left:381px;top:622px;" width="8" height="4" viewBox="0 0 8 4"><path d="M0 0 H8 L4 4.5 Z" fill="#888"/></svg>
<div style="left:395px;top:355px;width:600px;height:308px;background:#8ec8f9;border:1px solid #5b93cc;box-sizing:border-box;box-shadow:0 0 6px rgba(0,0,0,0.15)"></div>
<svg style="left:405px;top:362px;" width="16" height="16" viewBox="0 0 16 16"><rect x="-0.5" y="-0.5" width="17" height="16" fill="#fff" opacity="0.9"/><rect x="1" y="12" width="2" height="3" fill="#f7a30c"/><rect x="4" y="12" width="2" height="3" fill="#6fc0f5"/><rect x="4" y="10" width="2" height="2" fill="#6db36b"/><rect x="7" y="12" width="2" height="3" fill="#6fc0f5"/><rect x="7" y="9" width="2" height="3" fill="#6db36b"/><rect x="10" y="9" width="2" height="6" fill="#6fc0f5"/><rect x="10" y="8" width="2" height="1" fill="#6db36b"/><rect x="13" y="12" width="2" height="3" fill="#6fc0f5"/><rect x="13" y="10" width="2" height="2" fill="#6db36b"/><rect x="1" y="5" width="2" height="2" fill="#f7a30c"/><rect x="4" y="3" width="2" height="3" fill="#6db36b"/><rect x="10" y="2" width="2" height="2" fill="#f7a30c"/><rect x="13" y="1" width="2" height="4" fill="#f7a30c"/><polyline points="0,10 10,5.4 16,8.6" fill="none" stroke="#c98ba8" stroke-width="1.5"/><polyline points="0,10 10,5.4 16,8.6" fill="none" stroke="#8e7cc3" stroke-width="1.5" stroke-dasharray="1.2 1.2"/></svg>
<div class="t" style="left:600px;top:363.64px;font-size:14.6px;color:#222">Edit Colors [Measure Names]</div>
<div style="left:957px;top:356px;width:31px;height:20px;background:#c75050"></div>
<svg style="left:968px;top:362px;" width="9" height="9" viewBox="0 0 9 9"><path d="M0.7 0.7L8.3 8.3M8.3 0.7L0.7 8.3" stroke="#fff" stroke-width="1.6"/></svg>
<div style="left:402px;top:385px;width:586px;height:271px;background:#f0f0f0;border:1px solid #6ea3d6;box-sizing:border-box"></div>
<div class="t" style="left:412.8px;top:397.71px;font-size:10.5px;color:#111">Select Data Item</div>
<div style="left:413px;top:410px;width:226px;height:192px;background:#fff;border:1px solid #80858f;box-sizing:border-box"></div>
<div style="left:415px;top:414px;width:10px;height:10px;background:#4472a6"></div>
<div class="t" style="left:428.4px;top:413.63px;font-size:10.6px;color:#666">Profit</div>
<div style="left:415px;top:430px;width:10px;height:10px;background:#f79742"></div>
<div style="left:426px;top:427px;width:39px;height:16px;background:#cde0f7;border:1px dotted #111;box-sizing:border-box"></div>
<div class="t" style="left:428.4px;top:429.23px;font-size:10.6px;color:#666">Freight</div>
<div style="left:469.2px;top:424.4px;width:22px;height:22px;border-radius:50%;background:#e1474c;box-shadow:1px 1px 2px rgba(0,0,0,0.35)"></div>
<div class="t" style="left:180.2px;width:600px;text-align:center;top:427.49px;font-size:16.2px;color:#fff;-webkit-text-stroke:0">2</div>
<div class="t" style="left:658.6px;top:401.11px;font-size:10.5px;color:#111">Select Color Theme:</div>
<div style="left:755px;top:396px;width:222px;height:20px;background:linear-gradient(#f3f3f3,#e6e6e6);border:1px solid #acacac;box-sizing:border-box"></div>
<div class="t" style="left:758px;top:401.03px;font-size:10.6px;color:#111">Default</div>
<svg style="left:964px;top:405px;" width="8" height="6" viewBox="0 0 8 6"><path d="M0.8 0.8 L4 4.2 L7.2 0.8" fill="none" stroke="#444" stroke-width="1.7"/></svg>
<div style="left:659px;top:416px;width:318px;height:162px;background:#fff"></div>
<div style="left:699px;top:424px;width:24px;height:23px;background:#4472a6"></div>
<div style="left:806px;top:424px;width:24px;height:23px;background:#a23e3e"></div>
<div style="left:913px;top:424px;width:24px;height:23px;background:#7b9a45"></div>
<div style="left:699px;top:455px;width:24px;height:23px;background:#6a4d8a"></div>
<div style="left:806px;top:455px;width:24px;height:23px;background:#3b8ba1"></div>
<div style="left:913px;top:455px;width:24px;height:23px;background:#d07b35"></div>
<div style="left:699px;top:486px;width:24px;height:23px;background:#4e82c4"></div>
<div style="left:806px;top:486px;width:24px;height:23px;background:#c24b48"></div>
<div style="left:913px;top:486px;width:24px;height:23px;background:#9bbb59"></div>
<div style="left:699px;top:517px;width:24px;height:23px;background:#8064a2"></div>
<div style="left:806px;top:517px;width:24px;height:23px;background:#4bacc6"></div>
<div style="left:913px;top:517px;width:24px;height:23px;background:#f79646"></div>
<div style="left:911px;top:515px;width:28px;height:26px;background:#f79646;border:2px solid #111;box-sizing:border-box"></div>
<svg style="left:928px;top:530px;" width="14" height="22" viewBox="0 0 14 22"><path d="M1 1 V16 L4.5 12.5 L7.5 19 L10 18 L7 11.5 L12 11.5 Z" fill="#fff" stroke="#111" stroke-width="1" stroke-linejoin="round"/></svg>
<div style="left:943.5px;top:529.5px;width:22px;height:22px;border-radius:50%;background:#e1474c;box-shadow:1px 1px 2px rgba(0,0,0,0.35)"></div>
<div class="t" style="left:654.5px;width:600px;text-align:center;top:532.59px;font-size:16.2px;color:#fff;-webkit-text-stroke:0">3</div>
<div style="left:660px;top:580px;width:316px;height:21px;background:linear-gradient(#f2f2f2,#e4e4e4);border:1px solid #acacac;box-sizing:border-box"></div>
<div class="t" style="left:517.8px;width:600px;text-align:center;top:585.11px;font-size:10.5px;color:#111">Assign Palette</div>
<div class="t" style="left:418.5px;top:624.76px;font-size:18px;color:#4c92c4;font-weight:bold">?</div>
<svg style="left:434px;top:632px;" width="6" height="4" viewBox="0 0 6 4"><path d="M0 0 H6 L3 3.5 Z" fill="#111"/></svg>
<div style="left:444px;top:623px;width:59px;height:21px;background:linear-gradient(#f2f2f2,#e4e4e4);border:1px solid #acacac;box-sizing:border-box"></div>
<div class="t" style="left:173.5px;width:600px;text-align:center;top:628.03px;font-size:10.6px;color:#111">Reset</div>
<div style="left:510px;top:623px;width:113px;height:21px;background:linear-gradient(#f2f2f2,#e4e4e4);border:1px solid #acacac;box-sizing:border-box"></div>
<div class="t" style="left:266.5px;width:600px;text-align:center;top:628.03px;font-size:10.6px;color:#111">Pick Screen Color</div>
<div style="left:802px;top:623px;width:45px;height:21px;background:linear-gradient(#f2f2f2,#e4e4e4);border:1px solid #acacac;box-sizing:border-box"></div>
<div class="t" style="left:524.5px;width:600px;text-align:center;top:628.03px;font-size:10.6px;color:#111">OK</div>
<div style="left:854px;top:623px;width:57px;height:21px;background:linear-gradient(#f2f2f2,#e4e4e4);border:1px solid #acacac;box-sizing:border-box"></div>
<div class="t" style="left:582.5px;width:600px;text-align:center;top:628.03px;font-size:10.6px;color:#111">Close</div>
<div style="left:918px;top:623px;width:57px;height:21px;background:#f0f0f0;border:1px solid #d5d5d5;box-sizing:border-box"></div>
<div class="t" style="left:646.5px;width:600px;text-align:center;top:628.03px;font-size:10.6px;color:#a0a0a0">Apply</div>
<div style="left:190.5px;top:211.4px;width:22px;height:22px;border-radius:50%;background:#e1474c;box-shadow:1px 1px 2px rgba(0,0,0,0.35)"></div>
<svg style="left:196.5px;top:216.4px;" width="10" height="12" viewBox="0 0 10 12"><path d="M5.6 0.6 V11.6" stroke="#fff" stroke-width="1.4"/><path d="M5.6 0.8 L2.2 3" stroke="#fff" stroke-width="1.2"/></svg>
</body></html>
